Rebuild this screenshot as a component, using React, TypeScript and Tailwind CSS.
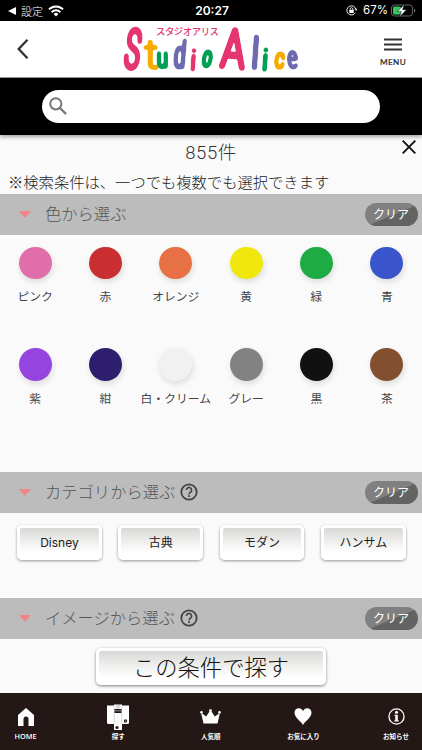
import { ReactNode } from 'react';
import clsx from 'clsx';

const jp = "font-['Noto_Sans_CJK_JP',sans-serif]";

const colors = [
  { name: 'ピンク', bg: 'bg-[#df6eab]' },
  { name: '赤', bg: 'bg-[#c92e30]' },
  { name: 'オレンジ', bg: 'bg-[#e77144]' },
  { name: '黄', bg: 'bg-[#f0e80c]' },
  { name: '緑', bg: 'bg-[#1eab44]' },
  { name: '青', bg: 'bg-[#3a55cb]' },
  { name: '紫', bg: 'bg-[#9644e0]' },
  { name: '紺', bg: 'bg-[#2d1f6d]' },
  { name: '白・クリーム', bg: 'bg-[#f1f1f1]' },
  { name: 'グレー', bg: 'bg-[#828282]' },
  { name: '黒', bg: 'bg-[#111111]' },
  { name: '茶', bg: 'bg-[#82502f]' },
];

const categories = ['Disney', '古典', 'モダン', 'ハンサム'];

const logoLetters = [
  { ch: 'S', x: 130.5, y: 67.5, size: 53, sx: 0.45, rot: 8, w: 3.2, color: '#e5356f' },
  { ch: 't', x: 151.5, y: 67.5, size: 38, sx: 1.15, rot: 0, w: 1, color: '#f8ab00' },
  { ch: 'u', x: 162.3, y: 67, size: 26, sx: 0.72, rot: 0, w: 1.4, color: '#009f55' },
  { ch: 'd', x: 179, y: 67, size: 36, sx: 0.55, rot: 5, w: 1.8, color: '#6f6bb0' },
  { ch: 'i', x: 192.7, y: 70, size: 28, sx: 1, rot: 4, w: 0.9, color: '#e5356f' },
  { ch: 'o', x: 206, y: 66, size: 27, sx: 0.55, rot: 10, w: 1.8, color: '#009f55' },
  { ch: 'A', x: 232, y: 67, size: 52, sx: 0.72, rot: 5, w: 3.2, color: '#e5356f' },
  { ch: 'l', x: 254.2, y: 68, size: 42, sx: 1, rot: 4, w: 1.4, color: '#6f6bb0' },
  { ch: 'i', x: 264.6, y: 70, size: 29, sx: 1, rot: 4, w: 1.1, color: '#009f55' },
  { ch: 'c', x: 279, y: 67.5, size: 26, sx: 0.65, rot: 6, w: 1.6, color: '#f8ab00' },
  { ch: 'e', x: 293, y: 67.5, size: 29, sx: 0.6, rot: -4, w: 1.2, color: '#6f6bb0' },
];

function Logo() {
  return (
    <svg viewBox="118 21 186 56" className="h-[56px] w-[186px] overflow-visible">
      {/* swells the thin letters into round brush strokes */}
      <filter
        id="brush"
        filterUnits="userSpaceOnUse"
        x="110"
        y="15"
        width="200"
        height="66"
        colorInterpolationFilters="sRGB"
      >
        <feGaussianBlur stdDeviation="1.2" />
        <feComponentTransfer>
          <feFuncA type="linear" slope="6" intercept="-0.25" />
        </feComponentTransfer>
      </filter>
      <text
        x="156"
        y="34.5"
        fontSize="9.4"
        fontWeight="500"
        fill="#e5356f"
        textLength="63"
        className="font-['Noto_Sans_CJK_JP',sans-serif]"
      >
        スタジオアリス
      </text>
      <g filter="url(#brush)">
        {logoLetters.map((l, i) => (
          <text
            key={i}
            transform={`translate(${l.x} ${l.y}) rotate(${l.rot}) scale(${l.sx} 1)`}
            textAnchor="middle"
            fontSize={l.size}
            fontWeight="100"
            fill={l.color}
            stroke={l.color}
            strokeWidth={l.w}
            strokeLinejoin="round"
            className="font-[Roboto,sans-serif]"
          >
            {l.ch}
          </text>
        ))}
      </g>
    </svg>
  );
}

function StatusBar() {
  return (
    <div className="grid h-[21px] grid-cols-3 items-center bg-black px-2 font-[Inter,sans-serif] text-white">
      <div className="flex items-center">
        <svg viewBox="0 0 8 8" className="h-[8px] w-[8px]" fill="#fff">
          <path d="M0 4 8 0v8z" />
        </svg>
        <span className={clsx(jp, 'ml-[5px] text-[11px] font-light leading-[20px]')}>設定</span>
        <svg viewBox="0 0 16 12" className="ml-[5px] h-[12px] w-[16px]" fill="none" stroke="#fff" strokeWidth="2">
          <path d="M1 4.4a10 10 0 0 1 14 0M3.6 7.2a6.2 6.2 0 0 1 8.8 0" />
          <path d="M8 11.4 5.6 9a3.4 3.4 0 0 1 4.8 0z" fill="#fff" stroke="none" />
        </svg>
      </div>
      <div className="pl-[2px] text-center text-[12px] font-semibold">20:27</div>
      <div className="flex items-center justify-end">
        <svg viewBox="0 0 12 12" className="h-[11px] w-[11px]" fill="none" stroke="#fff">
          <path d="M10.3 8.4A5 5 0 1 1 10.9 5" />
          <path d="m9.3 4.2 1.7 1.8.8-2.2" strokeWidth=".8" />
          <rect x="3.6" y="5.3" width="4.8" height="3.4" fill="#fff" stroke="none" />
          <path d="M4.6 5.5V4.3a1.4 1.4 0 0 1 2.8 0v1.2" strokeWidth=".9" />
        </svg>
        <span className="ml-[6px] mt-px text-[11.5px]">67%</span>
        <svg viewBox="0 0 25 13" className="-mr-[2px] ml-[3px] h-[13px] w-[25px]">
          <rect x=".5" y="1" width="21" height="11" rx="3" fill="none" stroke="#666" />
          <rect x="2" y="2.5" width="8" height="8" rx="1.5" fill="#35c75a" />
          <path d="M23 4.8v3.4c1-.3 1.3-1 1.3-1.7S24 5.1 23 4.8z" fill="#777" />
          <path d="m13.3.4-7 7h4l-1.7 5.3 7-7h-4z" fill="#fff" stroke="#000" strokeWidth=".5" />
        </svg>
      </div>
    </div>
  );
}

function Header() {
  return (
    <header className="flex h-[57px] items-center border-b border-[#999] bg-white">
      <svg viewBox="0 0 12 20" className="ml-[17px] h-[20px] w-[12px]" fill="none" stroke="#303030" strokeWidth="2.3">
        <path d="M10.5.8 1.7 10l8.8 9.2" />
      </svg>
      <div className="ml-[89px]">
        <Logo />
      </div>
      <div className="ml-[74px] mt-[8px] flex w-[30px] flex-col items-center">
        <svg viewBox="0 0 18 14" className="h-[14px] w-[18px]" stroke="#333" strokeWidth="1.8">
          <path d="M0 1.5h18M0 6.5h18M0 11.5h18" />
        </svg>
        <span className="mt-[4px] font-[Lato,sans-serif] text-[8.2px] leading-[12px] tracking-[0.4px] text-[#222] [-webkit-text-stroke:0.2px_#222]">
          MENU
        </span>
      </div>
    </header>
  );
}

function SearchBar() {
  return (
    <div className="relative h-[57px] bg-black pl-[42px] pt-[12px] shadow-[0_2px_4px_rgba(0,0,0,0.35)]">
      <div className="flex h-[32.5px] w-[338px] items-center rounded-full bg-white pl-[7px]">
        <svg viewBox="0 0 18 18" className="h-[18px] w-[18px]" fill="none" stroke="#757575">
          <circle cx="6.8" cy="6.8" r="5.6" strokeWidth="2" />
          <path d="m11 11 6 6" strokeWidth="2.3" />
        </svg>
      </div>
    </div>
  );
}

function ClearButton() {
  return (
    <button
      className={clsx(
        jp,
        'h-[22.5px] w-[53px] rounded-full bg-[linear-gradient(157deg,#808080_52%,#636363_53%)] text-[12px] leading-[22px] text-white'
      )}
    >
      クリア
    </button>
  );
}

function SectionBar({ title, help = false }: { title: string; help?: boolean }) {
  return (
    <div className="flex h-[40.5px] items-center bg-[#bcbcbc] pl-[19px] pr-[4.5px]">
      <svg viewBox="0 0 12 7" className="mt-px h-[7px] w-[12px]" fill="#f08583">
        <path d="M0 0h12L6 7z" />
      </svg>
      <h2 className={clsx(jp, '-mt-[2px] ml-[14px] text-[16.3px] font-light leading-[38px] text-[#555]')}>{title}</h2>
      {help && (
        <svg viewBox="0 0 18 18" className="ml-[5px] h-[18px] w-[18px]" fill="none" stroke="#444" strokeWidth="1.8">
          <circle cx="9" cy="9" r="7.7" />
          <path d="M6.4 7.1a2.6 2.6 0 1 1 4.2 2c-.9.7-1.6 1.1-1.6 2.2" strokeWidth="1.6" />
          <path d="M9 12.3v1.7" />
        </svg>
      )}
      <div className="ml-auto flex">
        <ClearButton />
      </div>
    </div>
  );
}

function ColorSwatch({ name, bg }: { name: string; bg: string }) {
  return (
    <div className="flex h-[101.5px] flex-col items-center">
      <span className={clsx('h-[32.7px] w-[32.7px] rounded-full shadow-[1px_3px_6px_rgba(0,0,0,0.12)]', bg)} />
      <span className={clsx(jp, 'mt-[8px] whitespace-nowrap text-[11.8px] leading-[18px] text-[#444]')}>{name}</span>
    </div>
  );
}

function KimonoIcon() {
  return (
    <svg viewBox="0 0 24 28" className="h-[28px] w-[24px]" fill="#fff">
      <path d="M1 2.5h22v17q0 1.500-1.500 1.500h-19Q1 21 1 19.500z" />
      <path d="M8 1.500h8V27H8z" />
      <path d="M8.300 3v18M15.700 3v18" stroke="#999" strokeWidth=".4" />
      <path d="m9 1 3 2.500 3-2.500M10 3.500l2 2 2-2" fill="none" stroke="#888" strokeWidth=".7" />
      <path d="M8.500 6h7v4h-7z" fill="#231815" />
      <path d="M8.500 7.800h7" stroke="#bbb" strokeWidth=".7" />
      <path d="M12 10.500V22" stroke="#ccc" strokeWidth=".3" />
      <circle cx="11" cy="24.500" r="1.600" fill="#231815" />
      <circle cx="19.500" cy="18" r="1.700" fill="#231815" />
      <circle cx="19.500" cy="18" r=".5" />
    </svg>
  );
}

function NavItem({ label, bold = false, children }: { label: string; bold?: boolean; children: ReactNode }) {
  return (
    <div className="flex w-[60px] flex-col items-center">
      <div className="flex h-[28px] items-center">{children}</div>
      <span
        className={clsx(
          'mt-[1px] whitespace-nowrap leading-[9px]',
          bold
            ? "font-['Open_Sans',sans-serif] text-[7.3px] font-semibold"
            : "font-['Noto_Sans_CJK_JP',sans-serif] text-[6.5px] font-bold"
        )}
      >
        {label}
      </span>
    </div>
  );
}

function BottomNav() {
  return (
    <nav className="flex h-[57px] justify-between bg-[#231815] pt-[10px] text-white">
      <div className="-ml-[4.5px]">
        <NavItem label="HOME" bold>
          <svg viewBox="0 0 16 18" className="h-[18px] w-[16px]" fill="#fff">
            <path d="M8 0 16 7v11h-5.500v-7a2.500 2.500 0 0 0-5 0v7H0V7z" />
          </svg>
        </NavItem>
      </div>
      <NavItem label="探す">
        <KimonoIcon />
      </NavItem>
      <NavItem label="人気順">
        <svg viewBox="0 0 21 15" className="h-[15px] w-[21px]" fill="#fff">
          <path d="M3.500 14.500h14L20 3.800l-5.200 3.700-4.300-6.500-4.300 6.500L1 3.800z" />
          <circle cx="1.500" cy="3.300" r="1.300" />
          <circle cx="10.500" cy="1.600" r="1.400" />
          <circle cx="19.500" cy="3.300" r="1.300" />
        </svg>
      </NavItem>
      <NavItem label="お気に入り">
        <svg viewBox="0 0 18 17" className="h-[17px] w-[18px]" fill="#fff">
          <path d="M9 17C7.500 13.500.5 10 .5 4.800.5 2 2.400.3 4.700.3 6.800.3 8.300 1.500 9 3.200 9.700 1.500 11.200.3 13.300.3c2.300 0 4.200 1.700 4.200 4.500C17.500 10 10.500 13.500 9 17z" />
        </svg>
      </NavItem>
      <div className="-mr-[4px]">
        <NavItem label="お知らせ">
          <svg viewBox="0 0 18 18" className="h-[17px] w-[17px]" fill="#fff">
            <circle cx="9" cy="9" r="8" fill="none" stroke="#fff" strokeWidth="1.4" />
            <circle cx="9" cy="4.6" r="1.6" />
            <path d="M6.700 7.200h3.700v6h1.100v1.100h-5v-1.100h1.200v-5h-1z" />
          </svg>
        </NavItem>
      </div>
    </nav>
  );
}

export default function App() {
  return (
    <div className="flex h-[750px] w-[422px] flex-col overflow-hidden bg-[#fafafa]">
      <StatusBar />
      <Header />
      <SearchBar />

      <div className="relative h-[59px] shrink-0">
        <p className="pt-[6px] text-center font-[Roboto,'Noto_Sans_CJK_JP',sans-serif] text-[18.5px] font-light leading-[24px] tracking-[0.6px] text-[#333]">
          855件
        </p>
        <p className={clsx(jp, 'whitespace-nowrap pl-[8px] pt-[5px] text-[15.3px] font-light leading-[22px] text-[#222]')}>
          ※検索条件は、一つでも複数でも選択できます
        </p>
        <svg
          viewBox="0 0 14 14"
          className="absolute right-[6px] top-[5px] h-[14px] w-[14px]"
          stroke="#111"
          strokeWidth="1.9"
        >
          <path d="m.7.7 12.6 12.6M13.3.7.7 13.3" />
        </svg>
      </div>

      <SectionBar title="色から選ぶ" />
      <div className="grid h-[237.5px] shrink-0 grid-cols-6 content-start pt-[12px]">
        {colors.map((c) => (
          <ColorSwatch key={c.name} name={c.name} bg={c.bg} />
        ))}
      </div>

      <SectionBar title="カテゴリから選ぶ" help />
      <div className="flex h-[85.5px] shrink-0 items-start gap-[16.5px] pl-[17px] pt-[12.5px]">
        {categories.map((c) => (
          <button
            key={c}
            className={clsx(
              'h-[35px] w-[84.8px] rounded-[5px] border-[3px] border-white bg-[linear-gradient(#d9d9d7,#fff_85%)] text-[12px] leading-[29px] text-[#222] shadow-[0_1px_3px_rgba(0,0,0,0.4)]',
              "font-[Inter,'Noto_Sans_CJK_JP',sans-serif]"
            )}
          >
            {c}
          </button>
        ))}
      </div>

      <SectionBar title="イメージから選ぶ" help />
      <div className="flex h-[54px] shrink-0 justify-center pt-[9.5px]">
        <button
          className={clsx(
            jp,
            'h-[37px] w-[230px] rounded-[5px] border-[3px] border-white bg-[linear-gradient(#d9d9d7,#fff_85%)] text-[22.3px] font-light leading-[31px] text-[#111] shadow-[0_1px_3px_rgba(0,0,0,0.5)]'
          )}
        >
          この条件で探す
        </button>
      </div>
      <BottomNav />
    </div>
  );
}
